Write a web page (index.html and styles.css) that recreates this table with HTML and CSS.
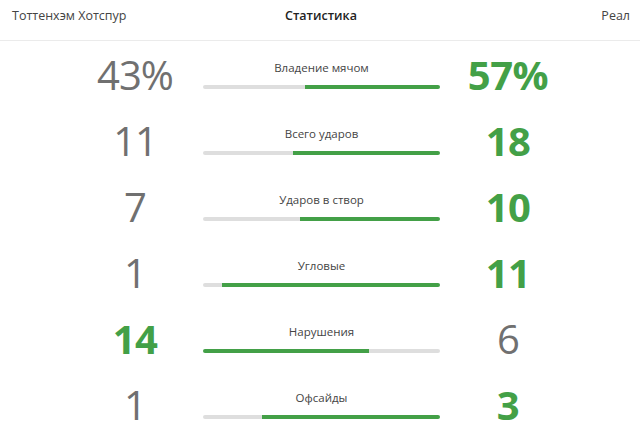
FILE: index.html
```html
<!DOCTYPE html>
<html lang="ru">
<head>
<meta charset="utf-8">
<link rel="stylesheet" href="styles.css">
</head>
<body>
<div class="stats">
  <div class="head">
    <span class="team">Тоттенхэм Хотспур</span>
    <span class="title">Статистика</span>
    <span class="team away">Реал</span>
  </div>
  <div class="row">
    <div class="num">43%</div>
    <div class="mid"><div class="label">Владение мячом</div><div class="bar right"><i style="width:43%"></i><b></b></div></div>
    <div class="num win">57%</div>
  </div>
  <div class="row">
    <div class="num">11</div>
    <div class="mid"><div class="label">Всего ударов</div><div class="bar right"><i style="width:38%"></i><b></b></div></div>
    <div class="num win">18</div>
  </div>
  <div class="row">
    <div class="num">7</div>
    <div class="mid"><div class="label">Ударов в створ</div><div class="bar right"><i style="width:41%"></i><b></b></div></div>
    <div class="num win">10</div>
  </div>
  <div class="row">
    <div class="num">1</div>
    <div class="mid"><div class="label">Угловые</div><div class="bar right"><i style="width:8%"></i><b></b></div></div>
    <div class="num win">11</div>
  </div>
  <div class="row">
    <div class="num win">14</div>
    <div class="mid"><div class="label">Нарушения</div><div class="bar left"><i style="width:70%"></i><b></b></div></div>
    <div class="num">6</div>
  </div>
  <div class="row">
    <div class="num">1</div>
    <div class="mid"><div class="label">Офсайды</div><div class="bar right"><i style="width:25%"></i><b></b></div></div>
    <div class="num win">3</div>
  </div>
</div>
</body>
</html>
```
FILE: styles.css
```css
html, body {
  margin: 0;
  padding: 0;
  background: #ffffff;
}
body {
  font-family: "Open Sans", "Noto Sans", sans-serif;
  color: #333;
}
.stats {
  width: 640px;
}
.head {
  display: grid;
  grid-template-columns: 1fr auto 1fr;
  align-items: center;
  height: 30px;
  padding: 0 10px 10px 12px;
  border-bottom: 1px solid #ebebeb;
  font-size: 12.5px;
  color: #444;
}
.title {
  font-weight: 600;
  color: #222;
}
.away {
  text-align: right;
}
.row {
  display: grid;
  grid-template-columns: 130px 237px 130px;
  column-gap: 3px;
  padding-left: 70px;
  height: 66px;
}
.num {
  text-align: center;
  font-size: 40px;
  font-weight: 400;
  line-height: 44px;
  margin-top: 12px;
  color: #707070;
  letter-spacing: -1px;
}
.num.win {
  font-weight: 700;
  color: #43a047;
  letter-spacing: -0.5px;
}
.mid {
  padding-top: 19px;
}
.label {
  text-align: center;
  font-size: 11.5px;
  line-height: 16px;
  color: #444;
}
.bar {
  margin-top: 9px;
  height: 4px;
  display: flex;
}
.bar i {
  display: block;
  height: 4px;
  background: #dedede;
  border-radius: 2px 0 0 2px;
}
.bar b {
  display: block;
  flex: 1;
  height: 4px;
  background: #43a047;
  border-radius: 0 2px 2px 0;
}
.bar.left i {
  background: #43a047;
}
.bar.left b {
  background: #dedede;
}
```
